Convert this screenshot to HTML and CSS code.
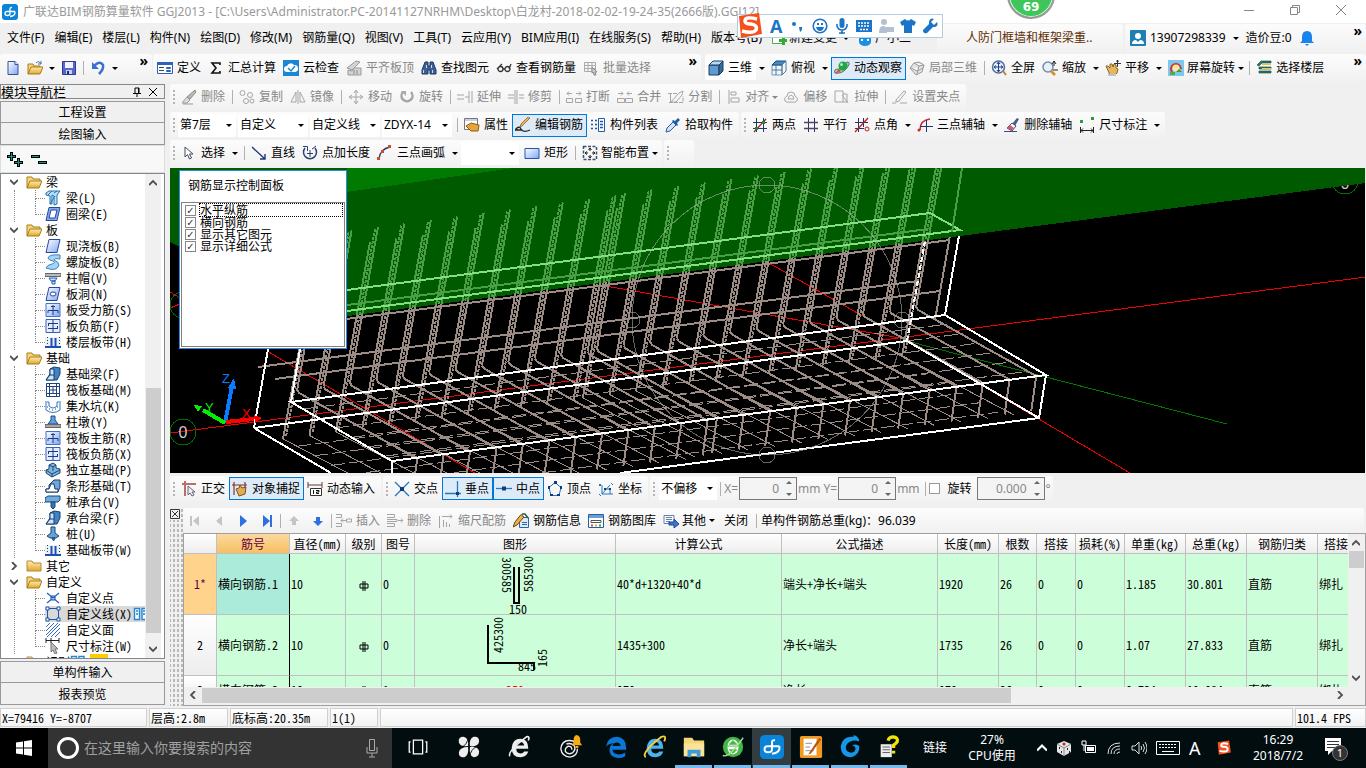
FILE: index.html
```
<!DOCTYPE html>
<html lang="zh-CN">
<head>
  <meta charset="UTF-8">
  <meta name="viewport" content="width=device-width, initial-scale=1.0">
  <title>广联达BIM钢筋算量软件 GGJ2013</title>
  <link rel="stylesheet" href="styles.css">
</head>
<body>

<!-- 图标库 -->
<svg class="sprite" aria-hidden="true">
  <defs>
    <linearGradient id="g-blue" x1="0" y1="0" x2="1" y2="1"><stop offset="0" stop-color="#fff"/><stop offset="1" stop-color="#7fa8f5"/></linearGradient>
    <linearGradient id="g-gold" x1="0" y1="0" x2="0" y2="1"><stop offset="0" stop-color="#fff0b0"/><stop offset="1" stop-color="#e2a52c"/></linearGradient>
  </defs>
  <symbol id="logo" viewBox="0 0 16 16"><rect width="16" height="16" rx="3" fill="#0a84d8"/><path d="M10 3.500Q8 3.200 8 5v4.500M13 7.500H5Q3 7.500 3 9.500T5.500 11.500Q8 11.500 8 9.500M13 7.500Q13.500 12 8 12.500" fill="none" stroke="#fff" stroke-width="1.300"/></symbol>
  <symbol id="new" viewBox="0 0 16 16"><path d="M3 1.500h7l3 3v10H3z" fill="url(#g-blue)" stroke="#34558b"/><path d="M10 1.500v3h3" fill="#fff" stroke="#34558b"/></symbol>
  <symbol id="open" viewBox="0 0 16 16"><path d="M1 14V4h5l1 2h6v2" fill="#f6d67a" stroke="#a87a1c"/><path d="M1 14l3-7h12l-3 7z" fill="url(#g-gold)" stroke="#a87a1c"/><path d="M9 3q3-3 5 1m0-3v3h-3" fill="none" stroke="#4d6f9f"/></symbol>
  <symbol id="folder-open" viewBox="0 0 16 16"><path d="M1 14V3h5l1 2h7v3" fill="#f6d67a" stroke="#a87a1c"/><path d="M1 14l3-7h12l-3 7z" fill="url(#g-gold)" stroke="#a87a1c"/></symbol>
  <symbol id="folder" viewBox="0 0 16 16"><path d="M1 13V3h5l1 2h8v8z" fill="url(#g-gold)" stroke="#b58a3a"/></symbol>
  <symbol id="save" viewBox="0 0 16 16"><path d="M1.500 1.500h13v13h-13z" fill="#5a66c9" stroke="#2c3a93"/><path d="M4 2h8v6H4z" fill="#eef3ff"/><path d="M5 10h6v4H5z" fill="#c9d0f0"/><path d="M6 11h2v3H6z" fill="#222c70"/></symbol>
  <symbol id="undo" viewBox="0 0 16 16"><path d="M4 6Q10 0 13 5Q14 9 9 14" fill="none" stroke="#3c6fd0" stroke-width="2.500"/><path d="M2 2v7h7z" fill="#3c6fd0"/></symbol>
  <symbol id="define" viewBox="0 0 16 16"><path d="M.5 2.500h15v11H.5z" fill="#fff" stroke="#2a63b8"/><path d="M0 2h16v3H0z" fill="#2a63b8"/><path d="M2 7.500h5M2 10.500h5" stroke="#444"/><path d="M9.500 7.500h4v1h-4zM9.500 10.500h4v1h-4z" fill="none" stroke="#2a63b8"/></symbol>
  <symbol id="sigma" viewBox="0 0 16 16"><path d="M12 5V3H4l4 5-4 5h8v-2" fill="none" stroke="#111" stroke-width="1.600"/></symbol>
  <symbol id="cloud" viewBox="0 0 16 16"><rect width="16" height="16" fill="#1b86d1"/><path d="M4 12a3 3 0 0 1 0-6 4 4 0 0 1 7-1 3.500 3.500 0 0 1 1 7z" fill="#fff"/><path d="M5 8l3 3 4-5" fill="none" stroke="#1b86d1" stroke-width="1.500"/></symbol>
  <symbol id="slab-top" viewBox="0 0 16 16"><path d="M1 8l9-7 4 1-8 8zM2 10v5h13V8H8l-2 3z" fill="#d4d4d4" stroke="#999"/><path d="M8 10v4m3-4v4" stroke="#888"/></symbol>
  <symbol id="find" viewBox="0 0 16 16"><path d="M4 2h3v4h2V2h3l3 8v4H9v-4H7v4H1v-4z" fill="#3d5f96" stroke="#1f3763"/><path d="M2.500 10v3m3-8v3m5-3v3m1 2v3" stroke="#c9dcf8" stroke-width="1"/></symbol>
  <symbol id="glasses" viewBox="0 0 16 16"><path d="M2 9a2.500 2.500 0 1 0 5 0 2.500 2.500 0 1 0-5 0zM9 9a2.500 2.500 0 1 0 5 0 2.500 2.500 0 1 0-5 0zM7 9h2M1 9l5-5m7 5l2-5" fill="none" stroke="#333" stroke-width="1.300"/></symbol>
  <symbol id="batch" viewBox="0 0 16 16"><path d="M1.500 2.500h11v9h-11zM1 5.500h12M1 8.500h12M5 2v10M9 2v10" fill="none" stroke="#aaa"/><path d="M9 7l5 5-2 0 1 3-2 0-1-3-1 1z" fill="#ccc" stroke="#888"/></symbol>
  <symbol id="cube" viewBox="0 0 16 16"><path d="M1 5h10v10H1z" fill="#5f9ad0" stroke="#1c3c60"/><path d="M1 5l4-4h10l-4 4z" fill="#b7d8f3" stroke="#1c3c60"/><path d="M11 5l4-4v10l-4 4z" fill="#336b9d" stroke="#1c3c60"/></symbol>
  <symbol id="topview" viewBox="0 0 16 16"><path d="M1 5h10v10H1z" fill="#edf6fd" stroke="#7a98b5"/><path d="M1 5l4-4h10l-4 4z" fill="#458bc5" stroke="#1c4d78"/><path d="M11 5l4-4v10l-4 4zM5 5v10m-4-5h10" fill="none" stroke="#4d7a9f"/></symbol>
  <symbol id="orbit" viewBox="0 0 16 16"><path d="M1 13Q-1 9 5 9L13 2q5 0-1 7Q8 14 1 13z" fill="#a9c9a9" stroke="#667"/><circle cx="9" cy="6" r="4.500" fill="#23a445"/><circle cx="7.500" cy="4.500" r="1.500" fill="#a8efb4"/><path d="M1 14l4-5 2 2z" fill="#d84a2a"/></symbol>
  <symbol id="part3d" viewBox="0 0 16 16"><path d="M1 8l4-5 5-1 5 3-2 7-6 3zM5 3l5 3 5-1m-5 1l-2 8M2 8l6 3 6-3" fill="#e3e3e3" stroke="#999"/></symbol>
  <symbol id="full" viewBox="0 0 16 16"><circle cx="7.500" cy="7" r="6" fill="#e7f1fb" stroke="#506e97" stroke-width="1.500"/><path d="M7.500 3v8m-4-4h8M6 4l1.500-2L9 4M6 10l1.500 2L9 10M5 5.500L3 7l2 1.500m5-3L12 7l-2 1.500" stroke="#1b3d91" fill="none"/><path d="M12 11l3 4" stroke="#c08430" stroke-width="2"/></symbol>
  <symbol id="zoom" viewBox="0 0 16 16"><circle cx="6" cy="7" r="5" fill="#e4f0fa" stroke="#7a8ca4" stroke-width="1.500"/><path d="M9 11l4 4" stroke="#d8892a" stroke-width="2.500"/><path d="M12 1v5m-2-2l2-3 2 3m-3 6h5" stroke="#222" fill="none"/></symbol>
  <symbol id="hand" viewBox="0 0 16 16"><path d="M1 6l2 0 2 2 0-4 2 0 1 3 1-3 2 1v3l2 1-1 4-2 2H5z" fill="#e8b75c" stroke="#8a6426"/><path d="M3 14h8v2H3z" fill="#b5c4d6"/><path d="M12.500 0v7M9 3.500h7M11.500 1.500l1-1.500 1 1.500" stroke="#333" fill="none"/></symbol>
  <symbol id="rotview" viewBox="0 0 16 16"><rect width="16" height="16" fill="#7cc8ee"/><path d="M4 12A5 5 0 1 1 13 9" fill="none" stroke="#d6322a" stroke-width="2"/><circle cx="8" cy="8" r="3.500" fill="#ffe9a0"/><path d="M8 12l3-3 3 3z" fill="#3f9e35"/><path d="M2 12h5v3H2z" fill="#54a944"/></symbol>
  <symbol id="floors" viewBox="0 0 16 16"><path d="M1 5l4-4h10v2H6L3 6zM3 7h12v2H3zM3 11h12v2H3z" fill="#2e7a6a" stroke="#15453b" stroke-width=".6"/><path d="M6 4h9v1H6zm0 4h9v1H6z" fill="#e5c73b"/></symbol>
  <symbol id="brush" viewBox="0 0 16 16"><path d="M14 1l1 2-6 7-3-2z" fill="#bbb" stroke="#888"/><path d="M6 8l3 3-3 3H1z" fill="#ddd" stroke="#999"/><path d="M2 15h10" stroke="#999"/></symbol>
  <symbol id="copy" viewBox="0 0 16 16"><circle cx="3.500" cy="4" r="2.500"/><circle cx="11" cy="6" r="2.500"/><circle cx="7" cy="12" r="2.500"/><circle cx="13" cy="12" r="2"/></symbol>
  <symbol id="mirror" viewBox="0 0 16 16"><path d="M6 3v10H1zM10 3v10h5zM8 1v14"/></symbol>
  <symbol id="move" viewBox="0 0 16 16"><path d="M8 2v12M2 8h12M6 4l2-3 2 3M6 12l2 3 2-3M4 6L1 8l3 2m8-4l3 2-3 2"/></symbol>
  <symbol id="rotate" viewBox="0 0 16 16"><path d="M4 3a5.500 5.500 0 1 0 8 0" stroke-width="2.500"/><path d="M2 2h5v5z" fill="#aaa" stroke="none"/></symbol>
  <symbol id="extend" viewBox="0 0 16 16"><path d="M0 6h7M0 10h7M8 8h4M12 2v12M15 2v12"/></symbol>
  <symbol id="trim" viewBox="0 0 16 16"><path d="M0 6h6M0 9h6M7 1v14M9 1v14M11 6h5M11 9h5"/></symbol>
  <symbol id="break" viewBox="0 0 16 16"><path d="M.5 9.500h6v4h-6zM9.500 9.500h6v4h-6zM1 4.500h5M3 2.500l-2 2 2 2m7-2h5m-2-2l2 2-2 2"/></symbol>
  <symbol id="join" viewBox="0 0 16 16"><path d="M.5 9.500h7v4h-7zM8.500 9.500h7v4h-7zM1 4.500h5M4 2.500l2 2-2 2m6-2h5m-3-2l-2 2 2 2"/></symbol>
  <symbol id="split" viewBox="0 0 16 16"><path d="M0 4.500h9M1 13.500h14V7" stroke-dasharray="4 1"/><path d="M3 13l8-9 4-2-1 4-6 7zM2.500 4v9"/></symbol>
  <symbol id="align" viewBox="0 0 16 16"><path d="M3 1v14M5 3h5v3H5zM5 9h8v4H5z"/></symbol>
  <symbol id="offset" viewBox="0 0 16 16"><path d="M2 12Q0 9 4 7a4 4 0 0 1 8 0q4 2 2 5-2 2-6 1-4 1-6-1zM5 10q1-4 3-4t3 4z"/></symbol>
  <symbol id="stretch" viewBox="0 0 16 16"><path d="M1 2h8v11H1zM9 5h4v8H9M8 6l6 8"/></symbol>
  <symbol id="clamp" viewBox="0 0 16 16"><path d="M0 14h4m4 0h7M4 11l8-9 2 1-7 9-3 1z"/></symbol>
  <symbol id="props" viewBox="0 0 16 16"><path d="M.5 1.500h13v11H.5z" fill="#fff" stroke="#777"/><path d="M1 2h12v2H1z" fill="#c2d4ea"/><path d="M2 9l5-3 8 2-1 6H7z" fill="#e8a43a" stroke="#8e5b13"/></symbol>
  <symbol id="edit" viewBox="0 0 16 16"><path d="M15 1L7 9l-2 1 1-3 7-7z" fill="#f0b35c" stroke="#8b4b1b" stroke-width=".7"/><path d="M0 13q4-5 6-1t9 1M0 13h7" stroke="#222" fill="none" stroke-width="1.300"/></symbol>
  <symbol id="complist" viewBox="0 0 16 16"><path d="M8.500 1.500h6v13h-6z" fill="#fff" stroke="#1e58a8"/><path d="M10 4.500h3M10 7.500h3M10 10.500h3M1 3.500h2m-2 4h2m-2 4h2M5 3.500h2m-2 4h2m-2 4h2" stroke="#1e58a8" stroke-width="1.300"/></symbol>
  <symbol id="pick" viewBox="0 0 16 16"><path d="M1 15l1-4 6-6 3 3-6 6z" fill="#d3e4f8" stroke="#2c5aa0"/><path d="M7 4l5 5 1-1-1-2 3-3-2-2-3 3-2-1z" fill="#1f5dac"/></symbol>
  <symbol id="twopt" viewBox="0 0 16 16"><path d="M4.500 1v14M11.500 1v14M1 5.500h14M1 11.500h14" stroke="#27346a"/><path d="M2 15L14 2" stroke="#a61c1c" stroke-width="1.300"/><path d="M10 4h3v3h-3zM3 10h3v3H3z" fill="#218c2c"/></symbol>
  <symbol id="parallel" viewBox="0 0 16 16"><path d="M5.500 1v14M11.500 1v14" stroke="#27346a"/><path d="M1 5.500h14M1 11.500h14" stroke="#5a4060" stroke-width="1.500"/></symbol>
  <symbol id="angle" viewBox="0 0 16 16"><path d="M4.500 1v14M9.500 1v9M1 5.500h13M1 11.500h9" stroke="#27346a"/><path d="M1 15L14 1" stroke="#c02020" stroke-width="1.300"/><circle cx="13" cy="12" r="2" fill="none" stroke="#c02020"/></symbol>
  <symbol id="threept" viewBox="0 0 16 16"><path d="M3 13Q3 3 13 2" stroke="#d02828" fill="none" stroke-width="1.500"/><path d="M9.500 3v12M3 9.500h13" stroke="#27346a"/><circle cx="2" cy="13" r="1.500" fill="#d02828"/></symbol>
  <symbol id="delaxis" viewBox="0 0 16 16"><path d="M13 1l2 1-4 7-3-2z" fill="#4a5d8c"/><path d="M8 6l4 3-4 5-5-3z" fill="#f8f8ff" stroke="#365082"/><path d="M6 8l4 3-2 3-5-3z" fill="#cc5c6c"/><path d="M0 14.500h13" stroke="#365082"/></symbol>
  <symbol id="dim" viewBox="0 0 16 16"><path d="M1 3h3v3H1zM12 0h3v3h-3z" fill="#2c9e35"/><path d="M1.500 10v6M14.500 10v6M2 13.500h12M4 11.500l-2 2 2 2m8-4l2 2-2 2" stroke="#222" fill="none"/></symbol>
  <symbol id="pointer" viewBox="0 0 16 16"><path d="M4 2v10l2.500-2.500L8.500 14l2-1-2-4H12z" fill="#fff" stroke="#444a60"/></symbol>
  <symbol id="line" viewBox="0 0 16 16"><path d="M1 2l13 12M9 14h5V9" stroke="#1c3a78" fill="none" stroke-width="1.400"/></symbol>
  <symbol id="addlen" viewBox="0 0 16 16"><path d="M3 3a6.500 6.500 0 1 0 10 0" fill="none" stroke="#27406e" stroke-width="1.500"/><path d="M5 8.500h6M8 5v7M1 1.500h4.500V6M14 1l-4 3" stroke="#27406e" fill="none"/></symbol>
  <symbol id="arc" viewBox="0 0 16 16"><path d="M2 14Q3 4 13 2" stroke="#293f6d" fill="none" stroke-width="1.500"/><path d="M0 12h3v3H0zM4 5h3v3H4zM11 0h3v3h-3z" fill="#d04a2a"/></symbol>
  <symbol id="rect" viewBox="0 0 16 16"><path d="M1 3.500h14v10H1z" fill="url(#g-blue)" stroke="#2653b5"/></symbol>
  <symbol id="smart" viewBox="0 0 16 16"><path d="M1.500 1.500h13v13h-13z" fill="none" stroke="#3c5374" stroke-dasharray="3 1.500" stroke-width="1.500"/><path d="M8 3v3M8 10v3M3 8h3m4 0h3M6.500 5L8 3l1.500 2m-3 6L8 13l1.500-2M5 6.500L3 8l2 1.500m6-3L13 8l-2 1.500" stroke="#222" fill="none"/></symbol>
  <symbol id="ortho" viewBox="0 0 16 16"><path d="M1 3h14M4 0v15" stroke="#bd6d6d" stroke-width="2"/><path d="M7 5v9l2-2 2 3 2-1-2-3h3z" fill="#eee" stroke="#667"/></symbol>
  <symbol id="snap" viewBox="0 0 16 16"><path d="M2 1v13M0 4h15M13 1v10" stroke="#932d24" fill="none" stroke-width="1.200"/><path d="M4 8l3-1 1-3 2 3 4-1-1 7-6 2z" fill="#e0ad52" stroke="#795422"/></symbol>
  <symbol id="dyn" viewBox="0 0 16 16"><path d="M1 1v6M15 1v6M1 4h14" stroke="#5e3d39"/><path d="M3.500 7.500h11v7h-11z" fill="#fff" stroke="#333"/><path d="M6.500 9v4M9 9.500h3v1.500H9.500v1.500H12" stroke="#111" fill="none"/></symbol>
  <symbol id="cross" viewBox="0 0 16 16"><path d="M1 1l14 14M15 1L1 15" stroke="#2277c0" stroke-width="1.300"/><path d="M6 6h4v4H6z" fill="#103a7a"/></symbol>
  <symbol id="perp" viewBox="0 0 16 16"><path d="M0 12.500h16M12.500 0v16" stroke="#2277c0" stroke-width="1.300"/><path d="M11 11h3v3h-3z" fill="#103a7a"/></symbol>
  <symbol id="mid" viewBox="0 0 16 16"><path d="M0 7.500h16" stroke="#2277c0" stroke-width="1.300"/><path d="M6 5.500h4v4H6z" fill="#103a7a"/></symbol>
  <symbol id="vertex" viewBox="0 0 16 16"><path d="M8 1.500l6 5-2 8H4l-2-8z" fill="none" stroke="#2277c0"/><path d="M7 0h3v3H7zM1 5h2v3H1zM13 5h2v3h-2zM3 13h3v2H3zM10 13h3v2h-3z" fill="#103a7a"/></symbol>
  <symbol id="coord" viewBox="0 0 16 16"><path d="M4 4v9h11M4 13l8-9M7 8h5v5M1 3l2 2m0-2L1 5m0 8l2 2m10-13l2 2" fill="none" stroke="#2277c0"/><path d="M6 7h2v2H6zm5 0h2v2h-2z" fill="#103a7a"/></symbol>
  <symbol id="first" viewBox="0 0 16 16"><path d="M3 3h2v10H3zM12 3v10L6 8z"/></symbol>
  <symbol id="prev" viewBox="0 0 16 16"><path d="M11 3v10L5 8z"/></symbol>
  <symbol id="next" viewBox="0 0 16 16"><path d="M5 2v12l7-6z"/></symbol>
  <symbol id="last" viewBox="0 0 16 16"><path d="M4 2v12l7-6zM11 2h2v12h-2z"/></symbol>
  <symbol id="up" viewBox="0 0 16 16"><path d="M8 3l5 5h-3v4H6V8H3z"/></symbol>
  <symbol id="down" viewBox="0 0 16 16"><path d="M8 13l5-5h-3V4H6v4H3z"/></symbol>
  <symbol id="insert" viewBox="0 0 16 16"><path d="M0 1.500h5.500v3H0M0 10.500h5.500v3H0M5 7.500h5m-3-2l-2 2 2 2M10.500 6h5v3h-5z"/></symbol>
  <symbol id="remove" viewBox="0 0 16 16"><path d="M0 1.500h7.500v3H0M0 10.500h7.500v3H0M0 6.500h10v2H0M11 7.500h5m-2-2l2 2-2 2"/></symbol>
  <symbol id="ruler" viewBox="0 0 16 16"><path d="M1.500 3v12M4 3.500h10m-2-2l2 2-2 2M5.500 7v7m3-5v5m3-3v3"/></symbol>
  <symbol id="info" viewBox="0 0 16 16"><path d="M6.500 4.500h9v10h-9z" fill="#dcebfa" stroke="#2c63a8"/><path d="M8 1.500L2 9l-2 5 4-2 7-8z" fill="#efb04c" stroke="#664016"/><path d="M9 9.500h5m-5 2h5" stroke="#2c63a8"/><path d="M9 1h3l3 4" stroke="#2b5b33" stroke-width="1.500" fill="none"/></symbol>
  <symbol id="library" viewBox="0 0 16 16"><path d="M.5 1.500h15v13H.5z" fill="#fff" stroke="#2a5d9f"/><path d="M1 2h14v3H1z" fill="#6b9dd6"/><path d="M3 7.500h10v2H3z" fill="none" stroke="#555"/><path d="M3 12.500h2" stroke="#d43" stroke-width="2"/><path d="M7 12.500h2" stroke="#e6a53a" stroke-width="2"/><path d="M11 12.500h2" stroke="#3a9a4a" stroke-width="2"/></symbol>
  <symbol id="other" viewBox="0 0 16 16"><path d="M1 2.500h10v8H1zM3 4.500h6m-6 2h6m-6 2h4" fill="#f7fbff" stroke="#6682a5"/><path d="M6 9h5V6l5 5-5 4v-3H6z" fill="#3c74cf" stroke="#1c4792"/></symbol>
  <!-- 构件树 -->
  <symbol id="beam" viewBox="0 0 16 16"><path d="M1 3l3-2h11l-3 4v9l-3 1V6L7 5v9H5V6L1 5z" fill="#b4e0fa" stroke="#2470b0"/><path d="M5 14l5-8M9 3l3-2M3 5l4-4" stroke="#2470b0"/></symbol>
  <symbol id="ring" viewBox="0 0 16 16"><path d="M4 1.500h11l-3 13H1z" fill="#86a9f2" stroke="#27479b"/><path d="M6 4h6l-2 8H4z" fill="#fff" stroke="#27479b"/></symbol>
  <symbol id="slab" viewBox="0 0 16 16"><path d="M4 1.500h11l-3 13H1z" fill="url(#g-blue)" stroke="#27479b"/></symbol>
  <symbol id="spiral" viewBox="0 0 16 16"><path d="M15 1Q4 0 3 4q0 2 5 3 3 2-1 3-5 1-6 4 11 4 13-3 0-3-5-5 0-2 6-1z" fill="#a5d4f5" stroke="#3a83bd"/></symbol>
  <symbol id="cap" viewBox="0 0 16 16"><path d="M0 3.500h16v3H0z" fill="#b8bcc0" stroke="#666"/><path d="M4 8h8l-2 3H6zM7 11h3v3H7z" fill="#d1e6ff" stroke="#215bb5"/></symbol>
  <symbol id="hole" viewBox="0 0 16 16"><path d="M4 1.500h11l-3 13H1z" fill="url(#g-blue)" stroke="#27479b"/><ellipse cx="8" cy="8" rx="3" ry="2" fill="#fff" stroke="#27479b"/></symbol>
  <symbol id="rebar-s" viewBox="0 0 16 16"><path d="M1 1.500h14v13H1z" fill="url(#g-blue)" stroke="#4a70bf"/><path d="M8 3v10M3 11V8.500h10V11M6 4.500h4" fill="none" stroke="#193b8c"/></symbol>
  <symbol id="rebar-f" viewBox="0 0 16 16"><path d="M1 1.500h14v13H1z" fill="#e5eeff" stroke="#3561bd"/><path d="M8 2v12M3 5.500h10M3 10.500h10M3.500 5v3m9 0v3" fill="none" stroke="#193b8c"/></symbol>
  <symbol id="strip" viewBox="0 0 16 16"><path d="M0 3h16v9H0z" fill="#e9f1ff"/><path d="M0 13h16M6.500 4v8m4-8v8" stroke="#1e4fae" stroke-width="2"/><path d="M2.500 3v9m12-9v9" stroke="#333" stroke-dasharray="1 2"/></symbol>
  <symbol id="fbeam" viewBox="0 0 16 16"><path d="M1 14l4-6V3l4-2 6 1v6l-3 6z" fill="#3f82c6" stroke="#153f6d"/><path d="M1 14l4-5h4v5zM5 9V3h4v6" fill="#cde4fb" stroke="#153f6d"/></symbol>
  <symbol id="tbeam" viewBox="0 0 16 16"><path d="M1 14v-3h3V7l5-5h6v7l-2 5z" fill="#6fa6da" stroke="#153f6d"/><path d="M1 14v-3h3l2-5h3l1 5h3v3z" fill="#fff" stroke="#153f6d"/></symbol>
  <symbol id="raft" viewBox="0 0 16 16"><path d="M1.500 1.500h13v13h-13zM4.500 1v14M11.500 1v14M1 4.500h14M1 11.500h14M8 5v6M5 8h6" fill="none" stroke="#1c437f"/></symbol>
  <symbol id="pit" viewBox="0 0 16 16"><path d="M0 4h4v4q4 4 8 0V4h4M1 5v7q7 5 14 0V5" fill="none" stroke="#2d79b9"/><path d="M4 11h1m2 1h1m2-1h1m1-2h1M2 9h1" stroke="#2345a0"/></symbol>
  <symbol id="pier" viewBox="0 0 16 16"><path d="M6 2h4v4l3 4H3l3-4z" fill="#62a1e0" stroke="#1d4b87"/><path d="M0 10.500h16v3H0z" fill="#a5a8a8" stroke="#666"/></symbol>
  <symbol id="isol" viewBox="0 0 16 16"><path d="M1 8l3-1V3l4-2 3 2v3l4 1v4l-8 4-6-4z" fill="#7fb2df" stroke="#174875"/><path d="M1 8l6 4 8-4M7 12v3M4 3l4 2 3-2M8 5v4" fill="none" stroke="#174875"/></symbol>
  <symbol id="pilecap" viewBox="0 0 16 16"><path d="M0 4l3-2h12v4l-2 2H0z" fill="#71aadd" stroke="#174875"/><path d="M6 8h4v5l-2 2-2-2z" fill="#3c76b0" stroke="#174875"/></symbol>
  <symbol id="pile" viewBox="0 0 16 16"><path d="M6 1h4v6l4 3-3 2H5l-3-2 4-3zM7 12h3l-1.500 3z" fill="#66a0d8" stroke="#174875"/></symbol>
  <symbol id="cpoint" viewBox="0 0 16 16"><path d="M2 3l12 10M14 3L2 13M6 6h4v4H6z" fill="none" stroke="#235fae" stroke-width="1.200"/></symbol>
  <symbol id="cline" viewBox="0 0 16 16"><path d="M2.500 2.500h11v11h-11z" fill="none" stroke="#1d55ad"/><path d="M1 1h3v3H1zM12 1h3v3h-3zM1 12h3v3H1zM12 12h3v3h-3z" fill="#fff" stroke="#1d55ad"/></symbol>
  <symbol id="carea" viewBox="0 0 16 16"><path d="M1 5l4-4M1 9l8-8M1 13l12-12M2 15L15 2M6 15l9-9M10 15l5-5" stroke="#3869c9"/></symbol>
  <symbol id="cdim" viewBox="0 0 16 16"><path d="M1 0v5M6 0v5M14 0v5M1 2.500h13" stroke="#222"/><path d="M6 4v10l2-2 2 4 2-1-2-4h3z" fill="#bbb" stroke="#777"/></symbol>
  <symbol id="book" viewBox="0 0 16 16"><path d="M1.500 2.500h5v11h-5zM9 2.500h5v11H9zM3 5h2m-2 3h2m5-3h2m-2 3h2" fill="#fff" stroke="#2385d5" stroke-width="1.400"/></symbol>
  <!-- 通用 -->
  <symbol id="chev" viewBox="0 0 8 8"><path d="M0 2l4 4 4-4" fill="none" stroke="currentColor" stroke-width="1.800"/></symbol>
  <symbol id="ie" viewBox="0 0 26 26"><path d="M22 15H9q0 5 4.500 5 3 0 4-2h4.500q-2 6-8.500 6Q4 24 4 14 5 4 13.500 4 22 4 22 15zM9 11.500h8.500q-.5-4-4-4t-4.500 4z" fill="currentColor"/></symbol>
  <symbol id="sogou" viewBox="0 0 28 28"><path d="M3 4l20-3 3 21-21 4z" fill="#f4511e"/><path d="M21 7q-12-3-12 2 0 3 6 3 7 1 5 6-3 4-14 1" fill="none" stroke="#fff" stroke-width="3.500"/></symbol>
</svg>

<div class="app">
  <header class="titlebar">
    <svg class="icon"><use href="#logo"/></svg>
    <h1 class="titlebar__text">广联达BIM钢筋算量软件 GGJ2013 - [C:\Users\Administrator.PC-20141127NRHM\Desktop\白龙村-2018-02-02-19-24-35(2666版).GGJ12]</h1>
    <div class="titlebar__buttons">
      <button aria-label="最小化"><svg viewBox="0 0 12 12"><path d="M1 6.500h10"/></svg></button>
      <button aria-label="还原"><svg viewBox="0 0 12 12"><path d="M1.500 3.500h7v7h-7zM3.500 3V1.500h7v7H9"/></svg></button>
      <button aria-label="关闭窗口"><svg viewBox="0 0 12 12"><path d="M1 1l10 10M11 1L1 11"/></svg></button>
    </div>
    <div class="badge">69</div>
  </header>

  <div class="menurow">
    <nav class="menu">
      <button>文件(F)</button><button>编辑(E)</button><button>楼层(L)</button><button>构件(N)</button><button>绘图(D)</button><button>修改(M)</button><button>钢筋量(Q)</button><button>视图(V)</button><button>工具(T)</button><button>云应用(Y)</button><button>BIM应用(I)</button><button>在线服务(S)</button><button>帮助(H)</button><button>版本号(B)</button>
      <button class="menu__icon"><svg class="icon" viewBox="0 0 16 16"><path d="M1.500 2.500h10v11h-10z" fill="#fff" stroke="#5a5"/><path d="M8 9h3V6h3v3h2v3h-2v3h-3v-3H8z" fill="#3a3"/></svg>新建变更<i class="arrow"></i></button>
      <button class="menu__icon"><svg class="icon" viewBox="0 0 16 16"><path d="M2 7a6 5 0 0 1 12 0v5a6 4 0 0 1-12 0z" fill="#1b8fe0"/><path d="M4 9h2v2H4zm6 0h2v2h-2z" fill="#fff"/></svg>广小二</button>
    </nav>
    <div class="group group--news"><a class="news" href="#">人防门框墙和框架梁重..</a></div>
    <div class="group group--user">
      <button class="tool"><svg class="icon" viewBox="0 0 16 16"><rect width="16" height="16" rx="1" fill="#1d7fb4"/><circle cx="8" cy="6" r="3" fill="#fff"/><path d="M2 14q0-4 4-4l2 2 2-2q4 0 4 4z" fill="#fff"/></svg>13907298339</button><button class="drop" aria-label="账户"><i class="arrow"></i></button>
      <span class="beans">造价豆:0</span>
      <svg class="icon" viewBox="0 0 16 16"><path d="M8 1q5 0 5 6v4l2 2H1l2-2V7q0-6 5-6zM6 14h4l-2 2z" fill="#1683ee"/></svg>
      <b class="more">»</b>
    </div>
  </div>

  <div class="toolrow">
    <div class="group group--file">
      <button class="tool" aria-label="新建"><svg class="icon"><use href="#new"/></svg></button>
      <button class="tool" aria-label="打开"><svg class="icon"><use href="#open"/></svg></button><button class="drop" aria-label="最近文件"><i class="arrow"></i></button>
      <button class="tool" aria-label="保存"><svg class="icon"><use href="#save"/></svg></button><i class="sep"></i>
      <button class="tool" aria-label="撤销"><svg class="icon"><use href="#undo"/></svg></button><button class="drop" aria-label="撤销列表"><i class="arrow"></i></button>
      <b class="more">»</b>
    </div>
    <div class="group group--calc">
      <button class="tool"><svg class="icon"><use href="#define"/></svg>定义</button>
      <button class="tool"><svg class="icon"><use href="#sigma"/></svg>汇总计算</button>
      <button class="tool"><svg class="icon"><use href="#cloud"/></svg>云检查</button>
      <button class="tool" disabled><svg class="icon"><use href="#slab-top"/></svg>平齐板顶</button>
      <button class="tool"><svg class="icon"><use href="#find"/></svg>查找图元</button>
      <button class="tool"><svg class="icon"><use href="#glasses"/></svg>查看钢筋量</button>
      <button class="tool" disabled><svg class="icon"><use href="#batch"/></svg>批量选择</button>
      <b class="more">»</b>
    </div>
    <div class="group group--view">
      <button class="tool tool--white"><svg class="icon"><use href="#cube"/></svg>三维</button><button class="drop" aria-label="三维选项"><i class="arrow"></i></button>
      <button class="tool"><svg class="icon"><use href="#topview"/></svg>俯视</button><button class="drop" aria-label="俯视选项"><i class="arrow"></i></button>
      <button class="tool tool--on"><svg class="icon"><use href="#orbit"/></svg>动态观察</button>
      <button class="tool" disabled><svg class="icon"><use href="#part3d"/></svg>局部三维</button><i class="sep"></i>
      <button class="tool"><svg class="icon"><use href="#full"/></svg>全屏</button>
      <button class="tool"><svg class="icon"><use href="#zoom"/></svg>缩放</button><button class="drop" aria-label="缩放选项"><i class="arrow"></i></button>
      <button class="tool"><svg class="icon"><use href="#hand"/></svg>平移</button><button class="drop" aria-label="平移选项"><i class="arrow"></i></button>
      <button class="tool tool--menu"><svg class="icon"><use href="#rotview"/></svg>屏幕旋转<i class="arrow"></i></button><i class="sep"></i>
      <button class="tool"><svg class="icon"><use href="#floors"/></svg>选择楼层</button>
      <b class="more">»</b>
    </div>
  </div>

  <main class="work">
    <aside class="side">
      <div class="side__head"><span>模块导航栏</span>
        <svg viewBox="0 0 10 10"><path d="M3 1h4v5M3 1v5M1 6.500h8M5 7v3M6.500 1v5" fill="none" stroke="#000"/></svg>
        <svg viewBox="0 0 10 10"><path d="M1 1l8 8M9 1L1 9" stroke="#000"/></svg>
      </div>
      <button class="side__btn">工程设置</button>
      <button class="side__btn">绘图输入</button>
      <div class="side__tools">
        <button aria-label="全部展开"><svg viewBox="0 0 16 16"><path d="M4.500 0v9M0 4.500h9M11.500 6v9M7 10.500h9" stroke="#000" stroke-width="3"/><path d="M4.500 1v7M1 4.500h7M11.500 7v7M8 10.500h7" stroke="#0a9a8a"/></svg></button>
        <button aria-label="全部折叠"><svg viewBox="0 0 16 16"><path d="M0 4.500h9M7 10.500h9" stroke="#000" stroke-width="3"/><path d="M1 4.500h7M8 10.500h7" stroke="#0a9a8a"/></svg></button>
      </div>
      <div class="treebox">
        <ul class="tree">
          <li><div class="node"><svg class="chev"><use href="#chev"/></svg><svg class="icon"><use href="#folder-open"/></svg>梁</div>
            <ul>
              <li><svg class="icon"><use href="#beam"/></svg>梁(L)</li>
              <li><svg class="icon"><use href="#ring"/></svg>圈梁(E)</li>
            </ul></li>
          <li><div class="node"><svg class="chev"><use href="#chev"/></svg><svg class="icon"><use href="#folder-open"/></svg>板</div>
            <ul>
              <li><svg class="icon"><use href="#slab"/></svg>现浇板(B)</li>
              <li><svg class="icon"><use href="#spiral"/></svg>螺旋板(B)</li>
              <li><svg class="icon"><use href="#cap"/></svg>柱帽(V)</li>
              <li><svg class="icon"><use href="#hole"/></svg>板洞(N)</li>
              <li><svg class="icon"><use href="#rebar-s"/></svg>板受力筋(S)</li>
              <li><svg class="icon"><use href="#rebar-f"/></svg>板负筋(F)</li>
              <li><svg class="icon"><use href="#strip"/></svg>楼层板带(H)</li>
            </ul></li>
          <li><div class="node"><svg class="chev"><use href="#chev"/></svg><svg class="icon"><use href="#folder-open"/></svg>基础</div>
            <ul>
              <li><svg class="icon"><use href="#fbeam"/></svg>基础梁(F)</li>
              <li><svg class="icon"><use href="#raft"/></svg>筏板基础(M)</li>
              <li><svg class="icon"><use href="#pit"/></svg>集水坑(K)</li>
              <li><svg class="icon"><use href="#pier"/></svg>柱墩(Y)</li>
              <li><svg class="icon"><use href="#rebar-s"/></svg>筏板主筋(R)</li>
              <li><svg class="icon"><use href="#rebar-f"/></svg>筏板负筋(X)</li>
              <li><svg class="icon"><use href="#isol"/></svg>独立基础(P)</li>
              <li><svg class="icon"><use href="#tbeam"/></svg>条形基础(T)</li>
              <li><svg class="icon"><use href="#pilecap"/></svg>桩承台(V)</li>
              <li><svg class="icon"><use href="#fbeam"/></svg>承台梁(F)</li>
              <li><svg class="icon"><use href="#pile"/></svg>桩(U)</li>
              <li><svg class="icon"><use href="#strip"/></svg>基础板带(W)</li>
            </ul></li>
          <li><div class="node"><svg class="chev chev--shut"><use href="#chev"/></svg><svg class="icon"><use href="#folder"/></svg>其它</div></li>
          <li><div class="node"><svg class="chev"><use href="#chev"/></svg><svg class="icon"><use href="#folder-open"/></svg>自定义</div>
            <ul>
              <li><svg class="icon"><use href="#cpoint"/></svg>自定义点</li>
              <li class="current"><svg class="icon"><use href="#cline"/></svg>自定义线(X)<svg class="icon tag"><use href="#book"/></svg></li>
              <li><svg class="icon"><use href="#carea"/></svg>自定义面</li>
              <li><svg class="icon"><use href="#cdim"/></svg>尺寸标注(W)</li>
            </ul></li>
          <li><div class="node node--cad"><svg class="icon"><use href="#folder"/></svg>识别<svg class="icon tag"><use href="#book"/></svg><mark>NEW</mark></div></li>
        </ul>
        <div class="vbar vbar--tree"><svg class="chev chev--up"><use href="#chev"/></svg><i class="thumb"></i><svg class="chev"><use href="#chev"/></svg></div>
      </div>
      <button class="side__btn">单构件输入</button>
      <button class="side__btn">报表预览</button>
    </aside>

    <section class="content">
      <div class="toolrow toolrow--small">
        <div class="group grip outline">
          <button class="tool" disabled><svg class="icon"><use href="#brush"/></svg>删除</button><i class="sep"></i>
          <button class="tool" disabled><svg class="icon"><use href="#copy"/></svg>复制</button>
          <button class="tool" disabled><svg class="icon"><use href="#mirror"/></svg>镜像</button><i class="sep"></i>
          <button class="tool" disabled><svg class="icon"><use href="#move"/></svg>移动</button>
          <button class="tool" disabled><svg class="icon"><use href="#rotate"/></svg>旋转</button><i class="sep"></i>
          <button class="tool" disabled><svg class="icon"><use href="#extend"/></svg>延伸</button>
          <button class="tool" disabled><svg class="icon"><use href="#trim"/></svg>修剪</button><i class="sep"></i>
          <button class="tool" disabled><svg class="icon"><use href="#break"/></svg>打断</button>
          <button class="tool" disabled><svg class="icon"><use href="#join"/></svg>合并</button>
          <button class="tool" disabled><svg class="icon"><use href="#split"/></svg>分割</button><i class="sep"></i>
          <button class="tool tool--menu" disabled><svg class="icon"><use href="#align"/></svg>对齐<i class="arrow"></i></button>
          <button class="tool" disabled><svg class="icon"><use href="#offset"/></svg>偏移</button>
          <button class="tool" disabled><svg class="icon"><use href="#stretch"/></svg>拉伸</button><i class="sep"></i>
          <button class="tool" disabled><svg class="icon"><use href="#clamp"/></svg>设置夹点</button>
        </div>
      </div>
      <div class="toolrow toolrow--small">
        <div class="group grip">
          <span class="combo combo--floor"><select aria-label="楼层"><option>第7层</option></select></span>
          <span class="combo"><select aria-label="构件类别"><option>自定义</option></select></span>
          <span class="combo"><select aria-label="构件类型"><option>自定义线</option></select></span>
          <span class="combo"><select aria-label="构件名称"><option>ZDYX-14</option></select></span><i class="sep"></i>
          <button class="tool"><svg class="icon"><use href="#props"/></svg>属性</button>
          <button class="tool tool--on"><svg class="icon"><use href="#edit"/></svg>编辑钢筋</button>
          <button class="tool"><svg class="icon"><use href="#complist"/></svg>构件列表</button>
          <button class="tool"><svg class="icon"><use href="#pick"/></svg>拾取构件</button>
        </div>
        <div class="group grip">
          <button class="tool"><svg class="icon"><use href="#twopt"/></svg>两点</button>
          <button class="tool"><svg class="icon"><use href="#parallel"/></svg>平行</button>
          <button class="tool"><svg class="icon"><use href="#angle"/></svg>点角</button><button class="drop" aria-label="点角选项"><i class="arrow"></i></button>
          <button class="tool"><svg class="icon"><use href="#threept"/></svg>三点辅轴</button><button class="drop" aria-label="辅轴选项"><i class="arrow"></i></button>
          <button class="tool"><svg class="icon"><use href="#delaxis"/></svg>删除辅轴</button>
          <button class="tool"><svg class="icon"><use href="#dim"/></svg>尺寸标注</button><button class="drop" aria-label="标注选项"><i class="arrow"></i></button>
        </div>
      </div>
      <div class="toolrow toolrow--small">
        <div class="group grip">
          <button class="tool"><svg class="icon"><use href="#pointer"/></svg>选择</button><button class="drop" aria-label="选择选项"><i class="arrow"></i></button><i class="sep"></i>
          <button class="tool"><svg class="icon"><use href="#line"/></svg>直线</button>
          <button class="tool"><svg class="icon"><use href="#addlen"/></svg>点加长度</button>
          <button class="tool"><svg class="icon"><use href="#arc"/></svg>三点画弧</button><button class="drop" aria-label="画弧选项"><i class="arrow"></i></button>
          <span class="combo combo--floor"><select aria-label="画弧参数"><option></option></select></span>
          <button class="tool"><svg class="icon"><use href="#rect"/></svg>矩形</button><i class="sep"></i>
          <button class="tool tool--menu"><svg class="icon"><use href="#smart"/></svg>智能布置<i class="arrow"></i></button>
        </div>
        <div class="group grip group--empty"></div>
      </div>

      <div class="view">
        <svg class="scene" id="scene" viewBox="170 168 1196 305" preserveAspectRatio="xMinYMin slice">
          <g class="axis-red">
            <path d="M170 433L1366 277M267 351L475 473M767 262L907 341L1130 473M600 285L900 338M170 292l10 6M170 308l10-4"/>
          </g>
          <path class="axis-green" d="M907 341L1227 424"/>
          <g id="bars" class="bars"></g>
          <g class="bars bars--long">
            <path d="M270 329L950 240M258 367L918 281M275 379L940 291M962 168L935 320"/>
          </g>
          <g class="frame">
            <path d="M254 428L268 349M291 402L300 349M291 402L945 315L1046 375L392 461zM392 461V473M1046 375L1039 418L620 473M254 428L331 473M254 428L907 341L1039 418M945 315L960 230"/>
            <path d="M907 341L930 213" stroke-dasharray="5 3"/>
          </g>
          <g class="grid-no">
            <circle cx="183" cy="432" r="13"/><circle cx="183" cy="305" r="13"/><circle cx="1345" cy="181" r="13"/>
            <text x="183" y="438">0</text><text x="1345" y="189">0</text>
          </g>
          <path class="slab" d="M170 168H1366V183L325 319L170 242z"/>
          <path class="slab slab--lit" d="M347 168H513L347 192z"/>
          <g id="bars-green" class="bars bars--green"></g>
          <path class="frame frame--green" d="M347 290L930 213L960 230L347 311"/>
          <path class="bars bars--green bars--long" d="M347 305L928 229M962 168L952 232"/>
          <g class="orbit">
            <circle cx="767" cy="320" r="135"/><circle cx="767" cy="185" r="8"/><circle cx="632" cy="320" r="8"/><circle cx="902" cy="320" r="8"/><circle cx="767" cy="455" r="8"/>
          </g>
          <g class="ucs">
            <path stroke="#0a7cff" d="M225 423L232 386"/><path fill="#0a7cff" d="M228 388l6-10 2 11z"/>
            <path stroke="#00f000" d="M225 423L203 410"/><path fill="#00f000" d="M194 405l8 1-4 6z"/>
            <path stroke="#f00" d="M226 422L254 419"/><path fill="#f00" d="M254 415l8 3-7 5z"/>
            <text x="222" y="383" fill="#0a7cff">Z</text><text x="205" y="412" fill="#00f000">Y</text><text x="242" y="418" fill="#f00">X</text>
          </g>
        </svg>
        <div class="panel">
          <h2 class="panel__title">钢筋显示控制面板</h2>
          <div class="panel__list">
            <label class="focus"><input type="checkbox" checked><span>水平纵筋</span></label>
            <label><input type="checkbox" checked><span>横向钢筋</span></label>
            <label><input type="checkbox" checked><span>显示其它图元</span></label>
            <label><input type="checkbox" checked><span>显示详细公式</span></label>
          </div>
        </div>
      </div>

      <div class="toolrow toolrow--snap">
        <div class="group grip">
          <button class="tool"><svg class="icon"><use href="#ortho"/></svg>正交</button>
          <button class="tool tool--on"><svg class="icon"><use href="#snap"/></svg>对象捕捉</button>
          <button class="tool"><svg class="icon"><use href="#dyn"/></svg>动态输入</button>
        </div>
        <div class="group grip">
          <button class="tool"><svg class="icon"><use href="#cross"/></svg>交点</button>
          <button class="tool tool--on"><svg class="icon"><use href="#perp"/></svg>垂点</button>
          <button class="tool tool--on"><svg class="icon"><use href="#mid"/></svg>中点</button>
          <button class="tool"><svg class="icon"><use href="#vertex"/></svg>顶点</button>
          <button class="tool"><svg class="icon"><use href="#coord"/></svg>坐标</button>
        </div>
        <div class="group grip offset">
          <span class="combo combo--floor"><select aria-label="偏移方式"><option>不偏移</option></select></span><i class="sep"></i>
          <label for="off-x">X=</label><span class="spin"><input id="off-x" type="text" value="0" disabled><i></i></span><span class="unit">mm</span>
          <label for="off-y">Y=</label><span class="spin"><input id="off-y" type="text" value="0" disabled><i></i></span><span class="unit">mm</span><i class="sep"></i>
          <input class="box" type="checkbox" id="rot"><label class="dark" for="rot">旋转</label>
          <span class="spin spin--wide"><input type="text" value="0.000" aria-label="旋转角度" disabled><i></i></span><span>°</span>
        </div>
      </div>

      <div class="dock">
        <div class="dock__grip"><button aria-label="关闭面板"><svg viewBox="0 0 10 10"><path d="M.5 .5h9v9h-9zM2 2l6 6M8 2L2 8" fill="none" stroke="#333"/></svg></button></div>
        <div class="dock__main">
          <div class="group group--dock">
            <button class="nav off" aria-label="首条"><svg class="icon"><use href="#first"/></svg></button>
            <button class="nav off" aria-label="上一条"><svg class="icon"><use href="#prev"/></svg></button>
            <button class="nav" aria-label="下一条"><svg class="icon"><use href="#next"/></svg></button>
            <button class="nav" aria-label="末条"><svg class="icon"><use href="#last"/></svg></button><i class="sep"></i>
            <button class="nav off" aria-label="上移"><svg class="icon"><use href="#up"/></svg></button>
            <button class="nav" aria-label="下移"><svg class="icon"><use href="#down"/></svg></button><i class="sep"></i>
            <button class="tool line-icon" disabled><svg class="icon"><use href="#insert"/></svg>插入</button>
            <button class="tool line-icon" disabled><svg class="icon"><use href="#remove"/></svg>删除</button>
            <button class="tool line-icon" disabled><svg class="icon"><use href="#ruler"/></svg>缩尺配筋</button>
            <button class="tool"><svg class="icon"><use href="#info"/></svg>钢筋信息</button>
            <button class="tool"><svg class="icon"><use href="#library"/></svg>钢筋图库</button>
            <button class="tool tool--menu"><svg class="icon"><use href="#other"/></svg>其他<i class="arrow"></i></button>
            <button class="tool tool--text">关闭</button><i class="sep"></i>
            <span class="total">单构件钢筋总重(kg)：96.039</span>
          </div>
          <div class="gridbox">
            <div class="gridbox__view">
              <table class="grid">
                <colgroup><col class="w33"><col class="w73"><col class="w56"><col class="w36"><col class="w33"><col class="w201"><col class="w166"><col class="w156"><col class="w61"><col class="w38"><col class="w39"><col class="w49"><col class="w61"><col class="w61"><col class="w71"><col class="w61"></colgroup>
                <thead>
                  <tr><th></th><th class="sel">筋号</th><th>直径(mm)</th><th>级别</th><th>图号</th><th>图形</th><th>计算公式</th><th>公式描述</th><th>长度(mm)</th><th>根数</th><th>搭接</th><th>损耗(%)</th><th>单重(kg)</th><th>总重(kg)</th><th>钢筋归类</th><th>搭接形式</th></tr>
                </thead>
                <tbody>
                  <tr><th class="sel">1*</th><td class="cur">横向钢筋.1</td><td>10</td><td class="mid"><svg class="grade" viewBox="0 0 10 10"><path d="M1 3h8v4H1zM4 0v10M6 0v10"/></svg></td><td>0</td>
                    <td class="mid"><svg class="shape" viewBox="0 0 200 60"><path d="M98 13v36h5V13"/><text transform="translate(86 3) rotate(90)">300585</text><text transform="translate(117 38) rotate(-90)">585300</text><text x="93" y="60">150</text></svg></td>
                    <td>40*d+1320+40*d</td><td>端头+净长+端头</td><td>1920</td><td>26</td><td>0</td><td>0</td><td>1.185</td><td>30.801</td><td>直筋</td><td>绑扎</td></tr>
                  <tr><th>2</th><td>横向钢筋.2</td><td>10</td><td class="mid"><svg class="grade" viewBox="0 0 10 10"><path d="M1 3h8v4H1zM4 0v10M6 0v10"/></svg></td><td>0</td>
                    <td class="mid"><svg class="shape" viewBox="0 0 200 60"><path d="M72 10v38h46v7"/><text transform="translate(87 38) rotate(-90)">425300</text><text x="102" y="56">845</text><text transform="translate(131 52) rotate(-90)">165</text></svg></td>
                    <td>1435+300</td><td>净长+端头</td><td>1735</td><td>26</td><td>0</td><td>0</td><td>1.07</td><td>27.833</td><td>直筋</td><td>绑扎</td></tr>
                  <tr class="short"><th>3</th><td>横向钢筋.3</td><td>10</td><td class="mid"><svg class="grade" viewBox="0 0 10 10"><path d="M1 3h8v4H1zM4 0v10M6 0v10"/></svg></td><td>1</td><td class="mid red">250</td><td>970</td><td>净长</td><td>970</td><td>26</td><td>0</td><td>0</td><td>0.734</td><td>19.084</td><td>直筋</td><td>绑扎</td></tr>
                </tbody>
              </table>
            </div>
            <div class="vbar"><svg class="chev chev--up"><use href="#chev"/></svg><i class="thumb"></i><svg class="chev chev--end"><use href="#chev"/></svg></div>
            <div class="hbar"><svg class="chev chev--left"><use href="#chev"/></svg><i class="thumb"></i><svg class="chev chev--shut chev--end"><use href="#chev"/></svg></div>
          </div>
        </div>
      </div>
    </section>
  </main>

  <footer class="status">
    <span class="s-pos">X=79416 Y=-8707</span><span class="s-floor">层高:2.8m</span><span class="s-base">底标高:20.35m</span><span class="s-count">1(1)</span><span class="s-msg"></span><span class="s-fps">101.4 FPS</span>
  </footer>

  <div class="taskbar">
    <button class="start" aria-label="开始"><svg viewBox="0 0 16 16"><path d="M0 2.500l7-1v6H0zM8 1.300L16 0v7.500H8zM0 8.500h7v6l-7-1zM8 8.500h8V16l-8-1.300z" fill="#fff"/></svg></button>
    <div class="search"><i class="ring"></i><input type="text" placeholder="在这里输入你要搜索的内容" aria-label="搜索"><svg viewBox="0 0 12 20"><path d="M3.500 1.500h5v11h-5zM1 9v6h10V9M6 15v4M3 19h6" fill="none" stroke="#aaa"/></svg></div>
    <button class="task task--wide" aria-label="任务视图"><svg viewBox="0 0 26 26"><path d="M8 5.500h10v15H8zM5 7.500H3.500v11H5M21 7.500h1.500v11H21" fill="none" stroke="#fff" stroke-width="1.400"/></svg></button>
    <button class="task task--wide" aria-label="浏览器一"><svg viewBox="0 0 26 26"><g fill="#eee"><path d="M12 12Q4 13 2 8 1 2 7 2q6 1 5 10zM14 12Q13 4 18 2q6-1 6 5-1 6-10 5zM12 13q1 9-4 11-6 1-6-5 1-6 10-6zM14 13q9-1 10 5 0 6-6 6-5-1-4-11z"/></g><path d="M4 14q8-4 8-12m10 10q-8 4-8 12" stroke="#020d10" fill="none"/></svg></button>
    <button class="task task--wide" aria-label="浏览器二"><svg class="c-white" viewBox="0 0 26 26"><use href="#ie"/><path d="M2 23Q-1 18 20 2q4-1 2 4" fill="none" stroke="#eee" stroke-width="1.800"/></svg></button>
    <button class="task task--wide" aria-label="消息"><svg viewBox="0 0 26 26"><path d="M20 15q0 8-8 9-9-1-10-9 1-9 9-9 6 0 6 3M14 16q0-4-4-4-4 2-3 6 3 4 8 1 4-4 1-8-4-3-8-1" fill="none" stroke="#eee" stroke-width="1.500"/><path d="M19 0q5 1 4 8l2 3H14l2-3q-1-7 3-8zM18 12h3v2h-3z" fill="#f5ad14"/></svg></button>
    <button class="task" aria-label="Edge"><svg class="c-edge" viewBox="0 0 26 26"><path d="M2 13Q4 2 14 2q10 1 10 12v2H9q1 5 7 5 4 0 7-2v4q-3 2-8 2Q5 24 6 15q1-5 5-6-6 0-9 4zM9 12h9q0-4-4-4t-5 4z" fill="currentColor"/></svg></button>
    <button class="task" aria-label="IE"><svg class="c-ie" viewBox="0 0 26 26"><use href="#ie"/><path d="M3 24Q-3 20 20 2q6-2 3 5" fill="none" stroke="#f7cf3c" stroke-width="2"/></svg></button>
    <button class="task task--run" aria-label="资源管理器"><svg viewBox="0 0 26 26"><path d="M2 3h9l2 3h11v17H2z" fill="#f7d67a"/><path d="M2 9h22v14H2z" fill="#fbe39a"/><path d="M6 24v-8h14v8h-4v-4h-6v4z" fill="#3b9bdd"/></svg></button>
    <button class="task task--run" aria-label="360"><svg viewBox="0 0 26 26"><circle cx="13" cy="13" r="11" fill="#43b649"/><ellipse cx="13" cy="13" rx="6" ry="8" fill="#fff"/><path d="M7 12h12M9 16l4 4 4-4zM9 10l4-4 4 4z" fill="#43b649" stroke="#43b649"/><path d="M2 22Q8 26 24 3" fill="none" stroke="#a5e28a" stroke-width="1.500"/></svg></button>
    <button class="task task--run task--on" aria-label="广联达"><svg viewBox="0 0 16 16"><use href="#logo"/></svg></button>
    <button class="task task--run" aria-label="编辑器"><svg viewBox="0 0 26 26"><rect x="1" y="1" width="24" height="24" rx="2" fill="#f29a1f"/><path d="M5 4h14v18H5z" fill="#fff"/><path d="M7 9h7m-7 4h5m-5 4h9" stroke="#888"/><path d="M22 3L12 18l-2 3 3-1L24 5z" fill="#b9541a"/></svg></button>
    <button class="task task--run" aria-label="广联达助手"><svg viewBox="0 0 26 26"><path d="M17 2Q5 1 3 12q0 12 11 12 10-2 9-12-3-3-8-1 4 1 4 4-1 5-6 4-6-2-4-8 3-5 10-5l4 1q0-5-6-7z" fill="#1597e6"/></svg></button>
    <button class="task task--run" aria-label="帮助"><svg viewBox="0 0 26 26"><path d="M4 10h12v14H4z" fill="#eee"/><path d="M6 13h8m-8 3h8m-8 3h8" stroke="#555"/><path d="M12 6q1-4 6-4 5 1 4 5-1 2-4 4v3M18 17v3" fill="none" stroke="#f5e400" stroke-width="3.500"/></svg></button>
    <span class="links">链接</span>
    <span class="cpu">27%<br>CPU使用</span>
    <div class="tray">
      <svg class="chev chev--up"><use href="#chev"/></svg>
      <svg viewBox="0 0 16 16"><path d="M1 4l7-3 7 3v8l-7 4-7-4z" fill="#e6e6e6"/><path d="M1 4l7 4 7-4M8 8v8" stroke="#888" fill="none"/><circle cx="8" cy="4" r="1.500" fill="#c22"/><path d="M3 8h1m1 4h1m5-3h1m1 3h1" stroke="#222" stroke-width="2"/></svg>
      <svg viewBox="0 0 16 16"><path d="M4.500 5.500h10v7h-10zM1 1v4h4V1M3 5v6M2 0v2m2-2v2" fill="none" stroke="#fff"/><path d="M6 7h7v4H6z" fill="#fff"/></svg>
      <svg viewBox="0 0 16 16"><path d="M2 14Q2 3 14 3M5 14q0-8 9-8M8 14q0-5 6-5M11 14q0-2 3-2" fill="none" stroke="#ddd"/></svg>
      <svg viewBox="0 0 16 16"><path d="M1 6h3l4-4v12l-4-4H1zM10 6q1.500 2 0 4M12 4q3 4 0 8M14 2q4 6 0 12" fill="none" stroke="#ddd"/></svg>
      <svg class="kbd" viewBox="0 0 24 14"><path d="M.5 .5h23v13H.5z" fill="none" stroke="#fff"/><path d="M3 3.500h18M3 6.500h18" stroke="#fff" stroke-dasharray="2 1"/><path d="M6 10.500h12" stroke="#fff"/></svg>
      <b>A</b>
      <svg class="ime-tray" viewBox="0 0 28 28"><use href="#sogou"/></svg>
    </div>
    <time class="clock">16:29<br>2018/7/2</time>
    <button class="notice" aria-label="通知"><svg viewBox="0 0 26 26"><path d="M3 3h16v13H10l-4 4v-4H3z" fill="#fff"/><path d="M5 6.500h12m-12 3h12m-12 3h8" stroke="#333"/><circle cx="18" cy="18" r="7.500" fill="#333" stroke="#777"/></svg><span>1</span></button>
  </div>
</div>

<div class="ime">
  <svg class="ime__logo"><use href="#sogou"/></svg>
  <b>A</b>
  <svg viewBox="0 0 16 16"><circle cx="4" cy="6" r="2"/><path d="M9 9h3v2q0 2-2 3"/></svg>
  <svg viewBox="0 0 16 16"><circle cx="8" cy="8" r="6.800" fill="none" stroke="#1c74c8" stroke-width="1.600"/><path d="M5 5h2v2H5zm4 0h2v2H9zM4 9h8q-1 4-4 4T4 9z"/></svg>
  <svg viewBox="0 0 16 16"><rect x="5.500" y="0" width="5" height="10" rx="2.500"/><path d="M3 6v2q1 4 5 4t5-4V6M8 12v4M5 15h6" fill="none" stroke="#1c74c8" stroke-width="1.600"/></svg>
  <svg viewBox="0 0 16 16"><path d="M0 2h16v12H0z"/><path d="M2 5h12M2 8h12M4 11.500h8" stroke="#fff" stroke-width="1.300" stroke-dasharray="2 1"/></svg>
  <svg class="dim" viewBox="0 0 16 16"><circle cx="6" cy="4" r="3"/><path d="M1 15q0-8 5-7l3 2v5zM8 9h8v5H8z"/></svg>
  <svg viewBox="0 0 16 16"><path d="M5 1q3 3 6 0l5 3-2 4-2-1v8H4V7L2 8 0 4z"/></svg>
  <svg viewBox="0 0 16 16"><path d="M15 4l-3 3-3-3 3-3Q8-1 7 4v2L1 12q0 4 4 3l6-6q6 0 4-5z"/></svg>
</div>

<script src="scene.js"></script>
</body>
</html>
```

FILE: styles.css
```
/* ── 全局 ── */
* { box-sizing: border-box; }
html, body { margin: 0; height: 100%; }
body {
  background: #f0f0f0;
  color: #000;
  font: 12px/16px "Noto Sans", "Noto Sans CJK SC", sans-serif;
  overflow: hidden;
}
button, input, select { font: inherit; color: inherit; }
button { border: 0; padding: 0; background: none; white-space: nowrap; }
h1, h2, ul { margin: 0; padding: 0; font-weight: normal; list-style: none; }
.sprite { position: absolute; width: 0; height: 0; }
.icon { width: 16px; height: 16px; flex: none; }
.chev { width: 8px; height: 8px; flex: none; color: #505050; }
.chev--up { transform: rotate(180deg); }
.chev--left { transform: rotate(90deg); }
.chev--shut { transform: rotate(-90deg); }

.app { display: flex; flex-direction: column; height: 100vh; }

/* ── 标题栏 ── */
.titlebar {
  position: relative;
  display: flex;
  align-items: center;
  gap: 5px;
  height: 23px;
  padding: 0 2px;
  background: #fff;
  flex: none;
}
.titlebar__text { flex: 1; font-size: 12px; color: #999; white-space: nowrap; overflow: hidden; }
.titlebar__buttons { display: flex; }
.titlebar__buttons button { width: 46px; height: 22px; }
.titlebar__buttons svg { width: 12px; height: 12px; fill: none; stroke: #888; }
.badge {
  position: absolute;
  top: -29px;
  right: 311px;
  width: 48px;
  height: 48px;
  padding-top: 26px;
  border: 2px solid #999;
  border-radius: 50%;
  background: #3fc65a;
  box-shadow: inset 0 0 0 1px #dff5e2;
  color: #fff;
  font: bold 12px/16px "DejaVu Sans", sans-serif;
  text-align: center;
}

/* ── 菜单与工具栏 ── */
.menurow, .toolrow { display: flex; flex: none; align-items: center; height: 30px; }
.menu { display: flex; width: 937px; flex: none; padding-left: 2px; }
.menu button { padding: 0 5px; }
.menu .menu__icon { display: flex; align-items: center; gap: 2px; padding: 0 4px; }
.menu__icon .arrow { margin-left: 4px; }
.group {
  display: flex;
  align-items: center;
  height: 28px;
  padding: 0 2px;
  border-radius: 3px;
  background: linear-gradient(#fcfcfc, #f1f1f1);
}
.group--news { flex: 0 1 186px; padding-left: 29px; margin-right: 2px; }
.group--user { flex: 1; }
.news { color: #5b2c00; text-decoration: none; white-space: nowrap; }
.beans { margin: 0 7px 0 4px; }
.more { margin: -14px 2px 0 auto; font-size: 14px; line-height: 14px; }
.group--file { width: 152px; margin-right: 1px; }
.group--file .tool { padding: 0 2px; }
.group--calc { width: 548px; padding-left: 1px; margin-right: 4px; }
.group--view { flex: 1; padding-left: 0; }
.tool {
  display: flex;
  align-items: center;
  gap: 4px;
  height: 23px;
  padding: 0 3px 0 2px;
  border: 1px solid transparent;
  flex: none;
}
.tool:disabled { color: #888; }
.tool:disabled .icon { filter: grayscale(1); }
.tool--on { border-color: #0078d7; background: #dcebf7; }
.tool--white { background: #fff; }
.tool--menu { gap: 3px; padding-right: 1px; }
.outline .icon, .line-icon .icon { fill: none; stroke: #a5a5a5; }
.arrow {
  width: 0;
  height: 0;
  border: 3px solid transparent;
  border-top-color: currentColor;
  border-bottom: 0;
}
.drop { display: flex; justify-content: center; align-items: center; width: 12px; height: 22px; flex: none; }
.sep { width: 1px; height: 14px; margin: 0 3px; background: #b0b0b0; flex: none; }
.toolrow--small { height: 28px; }
.toolrow--small .group, .toolrow--snap .group { height: 26px; }
.grip::before {
  content: "";
  width: 2px;
  height: 14px;
  margin: 0 3px 0 1px;
  background: repeating-linear-gradient(#b5b5b5 0 2px, transparent 2px 4px);
}
.content .group { margin-right: 2px; }
.group--empty { width: 30px; }
.combo { position: relative; display: flex; width: 70px; height: 23px; margin-right: 2px; background: #fff; }
.combo--floor { width: 58px; }
.combo select { width: 100%; padding: 0 0 0 2px; border: 0; background: none; appearance: none; }
.combo::after {
  content: "";
  position: absolute;
  top: 10px;
  right: 4px;
  border: 3px solid transparent;
  border-top-color: #000;
  border-bottom: 0;
  pointer-events: none;
}

/* ── 左侧导航 ── */
.work { display: flex; flex: 1; min-height: 0; }
.side {
  display: flex;
  flex-direction: column;
  width: 166px;
  margin-right: 4px;
  padding: 1px 1px 1px 0;
  flex: none;
  font-family: "Noto Sans CJK SC", sans-serif;
  font-feature-settings: "hwid";
}
.side__head { display: flex; align-items: center; height: 15px; margin-bottom: 2px; border: 1px solid #888; line-height: 13px; font-size: 13px; }
.side__head span { flex: 1; }
.side__head svg { width: 10px; height: 10px; margin-right: 6px; }
.side__btn { height: 22px; flex: none; border: 1px solid #999; background: #f0f0f0; }
.side__btn + .side__btn { border-top: 0; }
.side__tools { display: flex; gap: 8px; height: 28px; padding: 6px; flex: none; border: 1px solid #ddd; background: #f8f8f8; }
.side__tools svg { width: 16px; height: 16px; }
.treebox { display: flex; flex: 1; min-height: 0; margin-bottom: 2px; border: 1px solid #828790; background: #fff; overflow: hidden; }
.tree { flex: 1; min-width: 0; padding: 0 0 0 9px; overflow: hidden; }
.tree .node, .tree ul li { display: flex; align-items: center; height: 16px; white-space: nowrap; }
.tree .node { gap: 4px; }
.node .icon { margin-left: 4px; }
.tree > li > ul { margin-left: 4px; padding-left: 20px; border-left: 1px dotted #888; }
.tree ul li { position: relative; gap: 5px; padding-left: 10px; }
.tree ul li::before { content: ""; position: absolute; top: 0; left: 0; width: 9px; height: 8px; border: dotted #888; border-width: 0 0 1px 1px; }
.tree ul li:not(:last-child)::after { content: ""; position: absolute; top: 8px; left: 0; height: 8px; border-left: 1px dotted #888; }
.tree .current { background: linear-gradient(#d9d9d9, #d9d9d9) 10px 0 no-repeat; }
.tree .tag { margin-left: -4px; }
.node--cad { padding-left: 12px; }
.node--cad mark { background: #fc0; }
.vbar { display: flex; flex-direction: column; align-items: center; width: 16px; padding: 5px 0; background: #f0f0f0; }
.thumb { display: block; background: #cdcdcd; }
.vbar .thumb { width: 15px; height: 17px; margin-top: 4px; }
.vbar .chev--end { margin-top: auto; }
.vbar--tree { justify-content: space-between; margin-right: 3px; }
.vbar--tree .thumb { height: 245px; margin: auto 0 12px; }

/* ── 三维视图 ── */
.content { display: flex; flex-direction: column; flex: 1; min-width: 0; }
.view { position: relative; flex: 1; min-height: 0; margin: 1px 1px 0 0; background: #000; overflow: hidden; }
.scene { display: block; width: 100%; height: 100%; shape-rendering: crispEdges; }
.scene path, .scene circle { fill: none; }
.axis-red path { stroke: #f00000; }
.scene .axis-green { stroke: #007800; }
.bars { stroke: #9c8c86; fill: none; }
.bars .thick, .bars--long { stroke-width: 2; }
.bars .twin { stroke-width: 2; stroke-dasharray: 3 1; }
.bars .along { stroke-dasharray: 14 4; }
.bars--green { stroke: #4a9f45; }
.frame { stroke: #fff; stroke-width: 2; }
.frame--green { stroke: #82e082; }
.scene .slab { fill: #005a00; }
.scene .slab--lit { fill: #007a00; }
.orbit circle { stroke: #aaa; stroke-opacity: .6; }
.grid-no circle { stroke: #007000; }
.grid-no text { fill: #ccc; font: 16px "Liberation Sans", sans-serif; text-anchor: middle; }
.ucs path { stroke-width: 4; }
.ucs path[fill="#0a7cff"] { fill: #0a7cff; }
.ucs path[fill="#00f000"] { fill: #00f000; }
.ucs path[fill="#f00"] { fill: #f00; }
.ucs text { font: 13px "Liberation Sans", sans-serif; }
.panel {
  position: absolute;
  top: 2px;
  left: 9px;
  display: flex;
  flex-direction: column;
  width: 168px;
  height: 179px;
  padding: 1px;
  border: 1px solid #2a8ae8;
  background: #fff;
}
.panel__title { padding: 6px 7px 8px; font-size: 12px; }
.panel__list { flex: 1; border: 1px solid #828282; padding: 1px 2px; font-family: "Noto Sans CJK SC", sans-serif; }
.panel__list label { display: flex; align-items: center; gap: 4px; height: 12px; line-height: 12px; }
.panel__list input {
  display: grid;
  place-content: center;
  appearance: none;
  width: 11px;
  height: 11px;
  margin: 0 0 0 1px;
  border: 1px solid #888;
}
.panel__list input:checked::before { content: "✓"; font: 10px/9px "DejaVu Sans", sans-serif; color: #333; }
.panel__list span { flex: 1; }
.focus span { outline: 1px dotted #000; }

/* ── 捕捉工具栏 ── */
.toolrow--snap { height: 31px; margin-bottom: 4px; }
.offset { gap: 1px; color: #888; }
.offset .combo { color: #000; margin: 0; }
.offset .sep { margin: 0 2px; }
.offset .dark { color: #000; margin: 0 4px 0 7px; }
.unit { margin-right: 2px; }
.spin { display: flex; align-items: center; width: 58px; height: 23px; border: 1px solid #777; background: #f4f4f4; }
.spin--wide { width: 68px; }
.spin input { flex: 1; min-width: 0; padding: 0 7px 0 0; border: 0; background: none; color: #888; text-align: right; }
.spin i { display: flex; flex-direction: column; justify-content: space-between; height: 15px; margin-right: 4px; }
.spin i::before, .spin i::after { content: ""; border: 3px solid transparent; }
.spin i::before { border-top: 0; border-bottom-color: #666; }
.spin i::after { border-bottom: 0; border-top-color: #666; }
.box { appearance: none; width: 11px; height: 11px; margin: 0; border: 1px solid #999; background: #fff; }

/* ── 钢筋表 ── */
.dock { display: flex; height: 198px; flex: none; }
.dock__grip { width: 13px; flex: none; background: radial-gradient(#b8b8b8 1px, transparent 1px) 2px 0 / 4px 5px; }
.dock__grip button { display: block; width: 10px; height: 12px; background: #f0f0f0; }
.dock__grip svg { display: block; width: 10px; height: 10px; }
.dock__main { flex: 1; min-width: 0; display: flex; flex-direction: column; }
.group--dock { height: 25px; padding-left: 0; }
.nav { width: 24px; height: 22px; }
.nav .icon { fill: #2f6fe0; vertical-align: middle; }
.off .icon { fill: #c4c4c4; }
.nav + .sep { margin: 0 1px; }
.tool--text { padding: 0 4px 0 6px; }
.total { margin-left: 1px; }
.gridbox {
  flex: 1;
  min-height: 0;
  display: grid;
  grid-template: minmax(0, 1fr) 18px / minmax(0, 1fr) 17px;
  border: 1px solid #a0a0a0;
  background: #f0f0f0;
  font-family: "Noto Sans CJK SC", sans-serif;
  font-feature-settings: "hwid";
}
.gridbox__view { overflow: hidden; }
.grid { width: 1195px; table-layout: fixed; border-collapse: separate; border-spacing: 0; }
.w33 { width: 33px; } .w36 { width: 36px; } .w38 { width: 38px; } .w39 { width: 39px; } .w49 { width: 49px; }
.w56 { width: 56px; } .w61 { width: 61px; } .w71 { width: 71px; } .w73 { width: 73px; }
.w156 { width: 156px; } .w166 { width: 166px; } .w201 { width: 201px; }
.grid th, .grid td { padding: 0 1px; border: solid #c0c0c0; border-width: 0 1px 1px 0; white-space: nowrap; overflow: hidden; }
.grid th { padding: 0; font-weight: normal; background: linear-gradient(#fff, #ededed); }
.grid thead th { height: 20px; }
.grid tbody tr { height: 61px; }
.grid tbody .short { height: 28px; }
.grid td { background: #ccffd9; }
.grid td:nth-child(2) { border-right-color: #000; }
.grid th.sel { background: linear-gradient(#fbd9a0, #f7bf62); color: #600040; }
.grid tbody th.sel { background: #ffd38c; }
.grid .cur { background: #abebd9; }
.grid .mid { text-align: center; }
.grid .red { color: #f00; }
.grade { width: 10px; height: 10px; fill: none; stroke: #000; vertical-align: middle; }
.shape { display: block; width: 200px; height: 60px; margin: 0 auto; font-size: 12px; }
.shape path { fill: none; stroke: #000; stroke-width: 2; }
.hbar { display: flex; align-items: center; grid-column: 1 / 3; padding: 0 21px 2px 5px; }
.hbar .thumb { flex: 0 0 70%; height: 15px; margin-left: 5px; }
.hbar .chev--end { margin-left: auto; }

/* ── 状态栏 ── */
.status { display: flex; gap: 2px; height: 22px; padding: 2px 0 1px; flex: none; font: 12px/18px "Noto Sans CJK SC", sans-serif; font-feature-settings: "hwid"; }
.status span { padding-left: 1px; border: 1px solid #d0d0d0; background: linear-gradient(#fff, #f2f2f2); white-space: nowrap; }
.s-pos { width: 147px; }
.s-floor { width: 79px; }
.s-base { width: 98px; }
.s-count { width: 48px; }
.s-msg { flex: 1; }
.s-fps { width: 71px; }

/* ── 任务栏 ── */
.taskbar { display: flex; align-items: center; height: 40px; flex: none; background: #020d10; color: #fff; }
.start { width: 48px; height: 40px; background: #000; }
.start svg { width: 16px; height: 16px; vertical-align: middle; }
.search { display: flex; align-items: center; width: 344px; height: 40px; padding: 0 14px 0 9px; background: #333; }
.ring { width: 22px; height: 22px; border: 3px solid #fff; border-radius: 50%; }
.search input { flex: 1; margin-left: 3px; border: 0; background: none; font-size: 14px; }
.search input::placeholder { color: #a0a0a0; }
.search svg { width: 12px; height: 20px; }
.task { display: flex; align-items: center; justify-content: center; width: 39px; height: 40px; border-bottom: 3px solid transparent; }
.task svg { width: 24px; height: 24px; }
.task--wide { width: 51px; }
.task--run { border-image: linear-gradient(90deg, transparent 4px, #76b9ed 4px 35px, transparent 35px) 3; }
.task--on { background: #333c40; }
.c-white { color: #eee; }
.c-edge { color: #0a78d8; }
.c-ie { color: #4ab4ee; }
.links { margin-left: 15px; }
.cpu { width: 90px; text-align: center; }
.tray { display: flex; align-items: center; gap: 9px; }
.tray svg { width: 16px; height: 16px; }
.tray .chev { width: 10px; height: 10px; color: #fff; }
.tray .kbd { width: 24px; height: 14px; }
.tray .ime-tray { margin-left: 6px; }
.tray b { font: 18px/20px "Noto Sans", sans-serif; }
.clock { margin-left: auto; width: 68px; text-align: center; }
.notice { position: relative; width: 54px; height: 40px; padding-right: 8px; }
.notice svg { width: 26px; height: 26px; vertical-align: middle; }
.notice span { position: absolute; top: 17px; left: 24px; width: 8px; font-size: 11px; }

/* ── 输入法浮条 ── */
.ime {
  position: absolute;
  top: 14px;
  left: 737px;
  display: flex;
  align-items: center;
  gap: 6px;
  height: 24px;
  padding-right: 4px;
  border: 1px solid #b5cbe0;
  background: #fff;
  color: #1c74c8;
}
.ime svg { width: 16px; height: 16px; fill: #1c74c8; }
.ime .ime__logo { width: 28px; height: 28px; margin-left: -2px; }
.ime b { width: 14px; font: bold 18px/20px "Open Sans", sans-serif; }
.ime .dim { fill: #b4bfd2; }
```

FILE: scene.js
```
// 生成墙、板内的钢筋线
const NS = 'http://www.w3.org/2000/svg';
const bars = document.getElementById('bars');
const green = document.getElementById('bars-green');

function addPath(parent, d, cls) {
  const p = document.createElementNS(NS, 'path');
  p.setAttribute('d', d);
  if (cls) p.setAttribute('class', cls);
  parent.appendChild(p);
}

// 绿色板下边缘在 x 处的高度
function slabEdge(x) {
  return 319 - (x - 325) * 136 / 1041;
}

function upright(x, y, len, cls) {
  const k = -0.18;
  addPath(bars, `M${x} ${y}L${x + k * len} ${y + len}`, cls);
  const cut = slabEdge(x - 15) - y;
  if (cut > 0) addPath(green, `M${x} ${y}L${x + k * cut} ${y + cut}`, cls);
}

function station(x, y) {
  upright(x, y, 156, 'thick');
  upright(x - 3, y + 2, 200, 'twin');
  upright(x - 8, y + 15, 190, 'thick');
  // 顶层弯折到前边
  addPath(bars, `M${x - 28} ${y + 156}l2 3l118 66l-5 35`, 'thick');
  // 底层弯折到前边
  addPath(bars, `M${x - 42} ${y + 205}l112 59`);
}

for (let j = -2; j <= 9; j++) station(378 + 26.4 * j, 227 - 3.5 * j);
for (let j = 0; j <= 12; j++) station(625 + 26.6 * j, 193 - 3.5 * j);

// 纵向分布筋
for (let t = 0.12; t < 1; t += 0.16) {
  addPath(bars, `M${291 + 101 * t} ${402 + 59 * t}L${935 + 101 * t} ${317 + 59 * t}`, 'along');
  addPath(bars, `M${285 + 105 * t} ${439 + 60 * t}L${897 + 110 * t} ${357 + 60 * t}`, 'along');
}
```
